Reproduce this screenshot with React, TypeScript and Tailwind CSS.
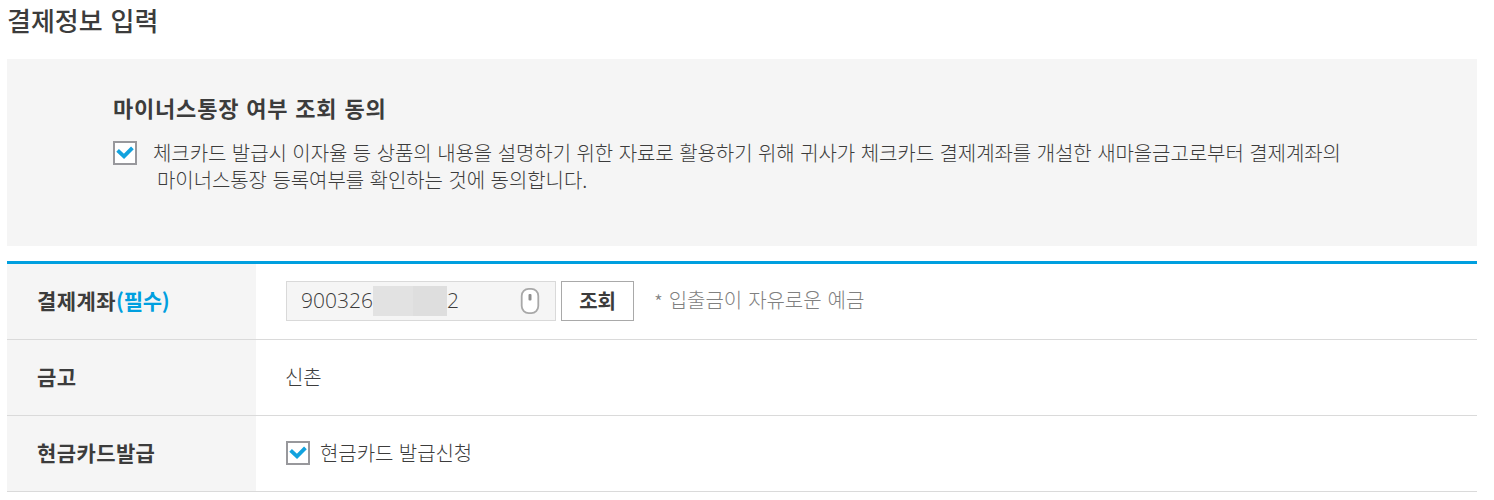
import type { ReactNode } from "react";

function Checkbox() {
  return (
    <span
      role="checkbox"
      aria-checked="true"
      className="flex size-6 shrink-0 items-center justify-center border-2 border-[#98989c] bg-white"
    >
      <svg width="20" height="20" viewBox="0 0 20 20" fill="none">
        <path d="M2.6 7.4 9 13.4 17.4 4.8" stroke="#12a2de" strokeWidth="3.8" />
      </svg>
    </span>
  );
}

function MouseIcon() {
  return (
    <svg width="20" height="28" viewBox="0 0 20 28">
      <rect x="1.7" y="1.9" width="16.6" height="24.2" rx="7" fill="#fff" stroke="#a8a8a8" strokeWidth="1.8" />
      <rect x="8.5" y="7" width="3" height="6.5" rx="1" fill="#8f8f8f" />
    </svg>
  );
}

function Row({ label, children }: { label: ReactNode; children: ReactNode }) {
  return (
    <div className="flex h-[76px] border-b border-[#dadada]">
      <div className="flex w-[249px] shrink-0 items-center bg-[#f5f5f5] pb-1 pl-[30px] text-[21px] leading-[30px] font-bold tracking-[0.4px]">
        <span>{label}</span>
      </div>
      <div className="flex items-center pb-[2px] pl-[30px]">{children}</div>
    </div>
  );
}

export default function App() {
  return (
    <main className="h-[500px] overflow-hidden bg-white pr-[17px] pl-[7px] font-['Noto_Sans_CJK_KR',sans-serif] text-[20px] leading-[27px] font-light tracking-[-0.08px] whitespace-nowrap text-[#3c3c3c] [word-spacing:1.2px]">
      <h1 className="h-[59px] pt-px text-[26px] leading-[38px] font-medium tracking-normal [word-spacing:2px]">
        결제정보 입력
      </h1>
      <section className="h-[187px] bg-[#f5f5f5] pt-[32px] pl-[106px]">
        <h2 className="text-[22px] leading-[32px] font-bold tracking-[0.8px]">마이너스통장 여부 조회 동의</h2>
        <div className="mt-4 flex">
          <div className="pt-[2px]">
            <Checkbox />
          </div>
          <p className="ml-4">
            체크카드 발급시 이자율 등 상품의 내용을 설명하기 위한 자료로 활용하기 위해 귀사가 체크카드 결제계좌를 개설한 새마을금고로부터 결제계좌의
            <span className="block pl-1">마이너스통장 등록여부를 확인하는 것에 동의합니다.</span>
          </p>
        </div>
      </section>
      <section className="mt-[15px] border-t-3 border-[#009fdf]">
        <Row
          label={
            <>
              결제계좌<span className="tracking-[-0.2px] text-[#009fdf]">(필수)</span>
            </>
          }
        >
          <div className="flex h-10 w-[270px] items-center border border-[#d9d9d9] bg-[#f5f5f5] pr-[15px] pl-[14px] font-['Open_Sans',sans-serif] text-[21px] font-light tracking-normal">
            <span>900326</span>
            <span className="flex h-[30px]">
              <span className="w-10 bg-[#e2e2e2]" />
              <span className="w-[34px] bg-[#dedede]" />
            </span>
            <span>2</span>
            <span className="ml-auto">
              <MouseIcon />
            </span>
          </div>
          <button className="ml-[5px] h-10 w-[73px] border border-[#a9a9a9] bg-white pb-px font-bold">조회</button>
          <span className="ml-5 flex pb-[3px] text-[#808080] [word-spacing:1.8px]">
            <span className="mr-[6px] pt-[5px] leading-[22px]">*</span>
            입출금이 자유로운 예금
          </span>
        </Row>
        <Row label="금고">
          <span className="-ml-px">신촌</span>
        </Row>
        <Row label="현금카드발급">
          <Checkbox />
          <span className="ml-[10px] pb-px">현금카드 발급신청</span>
        </Row>
      </section>
    </main>
  );
}
